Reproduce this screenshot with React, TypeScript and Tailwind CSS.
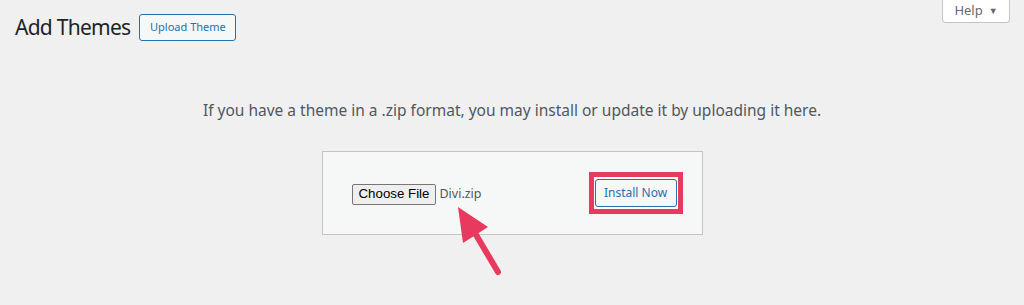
export default function App() {
  const sans = { fontFamily: '"Noto Sans", "Open Sans", sans-serif' };

  return (
    <div className="relative w-[1024px] h-[305px] overflow-hidden bg-[#f0f0f1]" style={sans}>
      {/* Header */}
      <div className="flex items-start justify-between">
        <div className="flex items-center gap-[9px] pl-[15px] pt-[14px]">
          <h1 className="text-[21px] leading-[27px] tracking-[-0.035em] text-[#1d2327] font-normal">Add Themes</h1>
          <button className="h-[27px] w-[97px] rounded-[3px] border border-[#2271b1] bg-[#f6f7f7] text-[11px] text-[#2271b1]">
            Upload Theme
          </button>
        </div>
        <div className="mr-[14px] h-[23px] w-[68px] flex items-center justify-center gap-1.5 bg-white border border-t-0 border-[#c3c4c7] rounded-b-[4px] text-[13px] text-[#646970]">
          Help
          <span className="text-[9px]">▼</span>
        </div>
      </div>

      {/* Upload area */}
      <p className="mt-[58px] text-center text-[15.5px] text-[#50575e]">
        If you have a theme in a .zip format, you may install or update it by uploading it here.
      </p>

      <div className="mx-auto mt-[29px] w-[381px] h-[84px] flex items-center justify-between pl-[29px] pr-[19px] bg-[#f6f7f7] border border-[#c3c4c7]">
        <div className="flex items-center gap-[3px] pt-[2px]">
          <span
            className="h-[21px] px-[6px] flex items-center bg-[#efefef] border border-[#767676] rounded-[2px] text-[13.3px] text-black"
            style={{ fontFamily: '"Liberation Sans", Arial, sans-serif' }}
          >
            Choose File
          </span>
          <span className="text-[12.5px] text-[#50575e]">Divi.zip</span>
        </div>
        <div className="border-[5px] border-[#e8395f] px-px py-[2px] bg-white">
          <button className="h-[28px] w-[82px] rounded-[3px] border border-[#2271b1] bg-[#f6f7f7] text-[12px] text-[#2271b1]">
            Install Now
          </button>
        </div>
      </div>

      {/* Annotation arrow */}
      <svg className="absolute left-0 top-0 pointer-events-none" width="1024" height="305">
        <line x1="498" y1="272" x2="472" y2="228" stroke="#e8395f" strokeWidth="6" strokeLinecap="round" />
        <polygon points="458,207 488,227 463,243" fill="#e8395f" />
      </svg>
    </div>
  );
}
